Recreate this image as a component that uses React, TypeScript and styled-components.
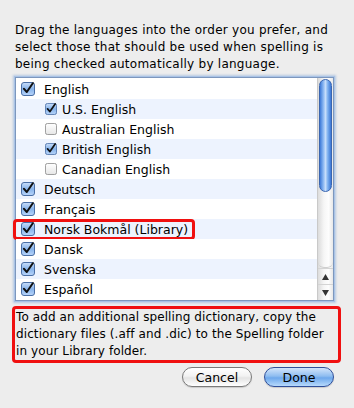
import styled, { createGlobalStyle } from "styled-components";

const Global = createGlobalStyle`
  html, body {
    margin: 0;
    padding: 0;
    background: #ededed;
  }
  body {
    font-family: "DejaVu Sans", "Liberation Sans", sans-serif;
    color: #000;
  }
`;

const Dialog = styled.div`
  width: 354px;
  height: 408px;
  box-sizing: border-box;
  padding: 22px 20px 0 15px;
  display: flex;
  flex-direction: column;
`;

const Intro = styled.p`
  margin: 0;
  font-size: 12px;
  line-height: 17px;
  letter-spacing: 0.25px;
  width: 328px;
`;

const ListBox = styled.div`
  margin-top: 4px;
  width: 319px;
  height: 224px;
  box-sizing: border-box;
  border: 1px solid #7d97bd;
  box-shadow: 0 0 0 1px #a9c3e6, 0 0 2px 2px rgba(120, 160, 215, 0.45);
  background: #fff;
  display: flex;
`;

const Rows = styled.div`
  flex: 1;
  padding-top: 1px;
`;

const Row = styled.div<{ $alt: boolean; $indent: boolean }>`
  position: relative;
  height: 20px;
  display: flex;
  align-items: center;
  gap: ${(p) => (p.$indent ? "5px" : "9px")};
  padding-left: ${(p) => (p.$indent ? "29px" : "5px")};
  background: ${(p) => (p.$alt ? "#edf3fe" : "#fff")};
  font-size: 12.5px;
`;

const Highlight = styled.span`
  position: absolute;
  left: -3px;
  top: 0;
  width: 182px;
  height: 21px;
  box-sizing: border-box;
  border: 3px solid #f01010;
  border-radius: 4px;
`;

const ScrollTrack = styled.div`
  width: 15px;
  display: flex;
  flex-direction: column;
  background: linear-gradient(to right, #dcdcdc, #f6f6f6 40%, #fdfdfd 70%, #e8e8e8);
  border-left: 1px solid #c9c9c9;
`;

const Thumb = styled.div`
  margin: 1px 1px 0;
  height: 113px;
  border-radius: 7px;
  border: 1px solid #3b66b0;
  background: linear-gradient(
    to right,
    #3e7ad8,
    #8ab7f2 30%,
    #c6ddfb 50%,
    #7fb1ef 70%,
    #3a76d6
  );
  box-sizing: border-box;
`;

const TrackRest = styled.div`
  flex: 1;
  border-bottom: 1px solid #cfcfcf;
  border-bottom-right-radius: 6px;
  border-bottom-left-radius: 6px;
`;

const Arrow = styled.div`
  height: 15px;
  display: flex;
  align-items: center;
  justify-content: center;
  border-top: 1px solid #d4d4d4;
`;

const Note = styled.div`
  margin: 5px 0 0 -3px;
  width: 329px;
  height: 57px;
  box-sizing: border-box;
  border: 3px solid #f01010;
  border-radius: 4px;
  padding: 0 0 0 1px;
  font-size: 12px;
  line-height: 17px;
  letter-spacing: 0.1px;
`;

const Buttons = styled.div`
  margin-top: 4px;
  width: 319px;
  display: flex;
  justify-content: flex-end;
  gap: 12px;
`;

const Button = styled.button<{ $primary?: boolean }>`
  width: 70px;
  height: 20px;
  border-radius: 10px;
  font-family: inherit;
  font-size: 12.5px;
  padding: 0;
  color: #000;
  border: 1px solid ${(p) => (p.$primary ? "#2f4f9a" : "#7a7a7a")};
  background: ${(p) =>
    p.$primary
      ? "linear-gradient(to bottom, #d3e5fb, #8fbdf0 45%, #6ea8ec 55%, #b7dafc)"
      : "linear-gradient(to bottom, #ffffff, #f2f2f2 45%, #e4e4e4 55%, #ffffff)"};
  box-shadow: 0 1px 1px rgba(0, 0, 0, 0.15);
`;

function CheckBox({ checked, small }: { checked: boolean; small: boolean }) {
  const s = small ? 12 : 14;
  return (
    <svg width={s} height={s} viewBox="0 0 14 14">
      <defs>
        <linearGradient id="cbOn" x1="0" y1="0" x2="0" y2="1">
          <stop offset="0" stopColor="#c9defa" />
          <stop offset="0.5" stopColor="#87b3ea" />
          <stop offset="1" stopColor="#b9d6fb" />
        </linearGradient>
        <linearGradient id="cbOff" x1="0" y1="0" x2="0" y2="1">
          <stop offset="0" stopColor="#ffffff" />
          <stop offset="1" stopColor="#e6e6e6" />
        </linearGradient>
      </defs>
      <rect
        x="0.5"
        y="0.5"
        width="13"
        height="13"
        rx="2.5"
        fill={checked ? "url(#cbOn)" : "url(#cbOff)"}
        stroke={checked ? "#4a6ea5" : "#8a8a8a"}
      />
      {checked && (
        <path
          d="M3 6.8 L5.8 10 L11.8 1.2"
          fill="none"
          stroke="#111"
          strokeWidth="2"
          strokeLinecap="round"
          strokeLinejoin="round"
        />
      )}
    </svg>
  );
}

const languages = [
  { name: "English", checked: true, sub: false },
  { name: "U.S. English", checked: true, sub: true },
  { name: "Australian English", checked: false, sub: true },
  { name: "British English", checked: true, sub: true },
  { name: "Canadian English", checked: false, sub: true },
  { name: "Deutsch", checked: true, sub: false },
  { name: "Français", checked: true, sub: false },
  { name: "Norsk Bokmål (Library)", checked: true, sub: false, mark: true },
  { name: "Dansk", checked: true, sub: false },
  { name: "Svenska", checked: true, sub: false },
  { name: "Español", checked: true, sub: false },
];

export default function App() {
  return (
    <>
      <Global />
      <Dialog>
        <Intro>
          Drag the languages into the order you prefer, and select those that should be used
          when spelling is being checked automatically by language.
        </Intro>
        <ListBox>
          <Rows>
            {languages.map((l, i) => (
              <Row key={l.name} $alt={i % 2 === 1} $indent={l.sub}>
                <CheckBox checked={l.checked} small={l.sub} />
                <span>{l.name}</span>
                {l.mark && <Highlight />}
              </Row>
            ))}
          </Rows>
          <ScrollTrack>
            <Thumb />
            <TrackRest />
            <Arrow>
              <svg width="7" height="6" viewBox="0 0 7 6">
                <path d="M3.5 0 L7 6 L0 6 Z" fill="#333" />
              </svg>
            </Arrow>
            <Arrow>
              <svg width="7" height="6" viewBox="0 0 7 6">
                <path d="M0 0 L7 0 L3.5 6 Z" fill="#333" />
              </svg>
            </Arrow>
          </ScrollTrack>
        </ListBox>
        <Note>
          To add an additional spelling dictionary, copy the dictionary files (.aff and .dic) to
          the Spelling folder in your Library folder.
        </Note>
        <Buttons>
          <Button>Cancel</Button>
          <Button $primary>Done</Button>
        </Buttons>
      </Dialog>
    </>
  );
}
